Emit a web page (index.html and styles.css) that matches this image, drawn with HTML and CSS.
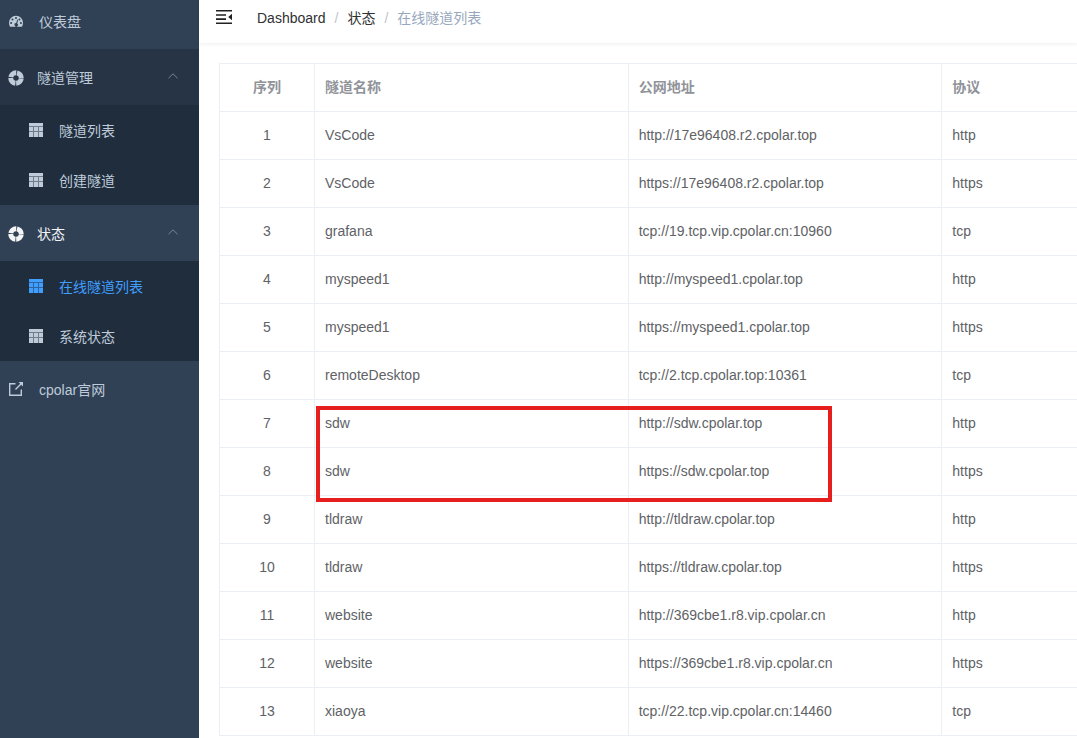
FILE: index.html
```html
<!DOCTYPE html>
<html lang="zh-CN">
<head>
<meta charset="utf-8">
<title>在线隧道列表</title>
<link rel="stylesheet" href="styles.css">
</head>
<body>
<svg class="defs" aria-hidden="true">
  <symbol id="i-grid" viewBox="0 0 14 14">
    <path d="M0 0h14v3H0zM0 4h4v4H0zM5 4h4v4H5zM10 4h4v4h-4zM0 9h4v5H0zM5 9h4v5H5zM10 9h4v5h-4z"/>
    <path opacity=".5" d="M0 3h14v1H0zM4 4h1v10H4zM9 4h1v10H9zM0 8h14v1H0z"/>
  </symbol>
  <symbol id="i-ring" viewBox="0 0 16 16">
    <circle cx="8" cy="8" r="5.3" fill="none" stroke="currentColor" stroke-width="4.900" stroke-dasharray="7.53 .8" stroke-dashoffset="-.4"/>
  </symbol>
  <symbol id="i-arrow" viewBox="0 0 10 6">
    <path d="M.5 5.2 5 .8l4.500 4.400" fill="none" stroke="currentColor"/>
  </symbol>
</svg>
<div class="app">
  <nav class="sidebar">
    <a class="item item-first" href="#">
      <svg class="icon" viewBox="0 0 14 14"><path fill-rule="evenodd" d="M7 .8a7 7 0 0 0-7 7c0 1.600.4 2.900 1 3.900h12c.6-1 1-2.300 1-3.900a7 7 0 0 0-7-7zM7 2a1 1 0 1 1 0 2 1 1 0 0 1 0-2zM3.500 3.500a1 1 0 1 1 0 2 1 1 0 0 1 0-2zM2.100 7.100a1 1 0 1 1 0 2 1 1 0 0 1 0-2zM11.900 7.100a1 1 0 1 1 0 2 1 1 0 0 1 0-2zM10.500 3.500a1 1 0 1 1 0 2 1 1 0 0 1 0-2zM8.300 4.500l.9.300-1 3.600a1.700 1.700 0 1 1-1-.3z"/></svg>
      <span>仪表盘</span>
    </a>
    <button class="item group hovered" type="button" aria-expanded="true">
      <svg class="icon-ring"><use href="#i-ring"/></svg><span>隧道管理</span><svg class="arrow"><use href="#i-arrow"/></svg>
    </button>
    <div class="submenu">
      <a class="sub" href="#"><svg class="icon"><use href="#i-grid"/></svg><span>隧道列表</span></a>
      <a class="sub" href="#"><svg class="icon"><use href="#i-grid"/></svg><span>创建隧道</span></a>
    </div>
    <button class="item group current" type="button" aria-expanded="true">
      <svg class="icon-ring"><use href="#i-ring"/></svg><span>状态</span><svg class="arrow"><use href="#i-arrow"/></svg>
    </button>
    <div class="submenu">
      <a class="sub active" href="#"><svg class="icon"><use href="#i-grid"/></svg><span>在线隧道列表</span></a>
      <a class="sub" href="#"><svg class="icon"><use href="#i-grid"/></svg><span>系统状态</span></a>
    </div>
    <a class="item" href="#">
      <svg class="icon" viewBox="0 0 14 14"><path fill="none" stroke="currentColor" stroke-width="1.400" d="M6.500 1.700H.7v11.600h11.600V7.500M6.500 7.500l5.900-5.900"/><path d="M9.500 0H14v4.500z"/></svg>
      <span>cpolar官网</span>
    </a>
  </nav>
  <main class="main">
    <header class="navbar">
      <button class="toggle" type="button" aria-label="收起菜单">
        <svg viewBox="0 0 16 14"><path d="M0 0h16v1.600H0zM0 4.200h10v1.600H0zM0 8.300h10v1.600H0zM0 12.400h16V14H0zM16 3.800v6.400L12.200 7z"/></svg>
      </button>
      <div class="breadcrumb">
        <a href="#">Dashboard</a><span class="sep">/</span><a href="#">状态</a><span class="sep">/</span><span class="here">在线隧道列表</span>
      </div>
    </header>
    <section class="content">
      <table class="table">
        <colgroup><col class="c-index"><col class="c-wide"><col class="c-wide"><col></colgroup>
        <thead><tr><th>序列</th><th>隧道名称</th><th>公网地址</th><th>协议</th></tr></thead>
        <tbody>
          <tr><td>1</td><td>VsCode</td><td>http://17e96408.r2.cpolar.top</td><td>http</td></tr>
          <tr><td>2</td><td>VsCode</td><td>https://17e96408.r2.cpolar.top</td><td>https</td></tr>
          <tr><td>3</td><td>grafana</td><td>tcp://19.tcp.vip.cpolar.cn:10960</td><td>tcp</td></tr>
          <tr><td>4</td><td>myspeed1</td><td>http://myspeed1.cpolar.top</td><td>http</td></tr>
          <tr><td>5</td><td>myspeed1</td><td>https://myspeed1.cpolar.top</td><td>https</td></tr>
          <tr><td>6</td><td>remoteDesktop</td><td>tcp://2.tcp.cpolar.top:10361</td><td>tcp</td></tr>
          <tr><td>7</td><td>sdw</td><td>http://sdw.cpolar.top</td><td>http</td></tr>
          <tr><td>8</td><td>sdw</td><td>https://sdw.cpolar.top</td><td>https</td></tr>
          <tr><td>9</td><td>tldraw</td><td>http://tldraw.cpolar.top</td><td>http</td></tr>
          <tr><td>10</td><td>tldraw</td><td>https://tldraw.cpolar.top</td><td>https</td></tr>
          <tr><td>11</td><td>website</td><td>http://369cbe1.r8.vip.cpolar.cn</td><td>http</td></tr>
          <tr><td>12</td><td>website</td><td>https://369cbe1.r8.vip.cpolar.cn</td><td>https</td></tr>
          <tr><td>13</td><td>xiaoya</td><td>tcp://22.tcp.vip.cpolar.cn:14460</td><td>tcp</td></tr>
        </tbody>
      </table>
      <div class="highlight"></div>
    </section>
  </main>
</div>
</body>
</html>
```
FILE: styles.css
```css
* { box-sizing: border-box; }

body {
  margin: 0;
  font: 14px/23px "Liberation Sans", "Noto Sans CJK SC", sans-serif;
  color: #606266;
  background: #fff;
}

a { color: inherit; text-decoration: none; }
button { border: 0; background: none; font: inherit; color: inherit; text-align: left; cursor: pointer; }
svg { display: block; flex: none; fill: currentColor; }
.defs { position: absolute; width: 0; height: 0; }

.app { display: flex; min-height: 100vh; }

.sidebar {
  display: flex;
  flex-direction: column;
  flex: none;
  width: 199px;
  background: #304156;
  color: #bfcbd9;
}
.sidebar span { padding-top: 2px; }

.item {
  display: flex;
  align-items: center;
  gap: 16px;
  width: 100%;
  height: 56px;
  padding: 0 20px 0 9px;
}
.item-first { height: 49px; padding-bottom: 6px; }
.group { gap: 13px; padding-left: 8px; }
.hovered { background: #263445; }
.current { color: #f4f4f5; }

.icon { width: 14px; height: 14px; }
.icon-ring { width: 16px; height: 16px; margin-top: 2px; }
.arrow { width: 10px; height: 6px; margin: 0 1px 2px auto; color: #7b8490; }

.submenu { background: #1f2d3d; }
.sub {
  display: flex;
  align-items: center;
  gap: 16px;
  height: 50px;
  padding-left: 29px;
}
.active { color: #409eff; }

.main { flex: 1; min-width: 0; }

.navbar {
  display: flex;
  align-items: center;
  gap: 25px;
  height: 43px;
  padding: 0 17px 9px;
  box-shadow: 0 1px 4px rgba(0, 21, 41, 0.08);
}
.toggle { padding: 0; color: #222; }
.toggle svg { width: 16px; height: 14px; }

.breadcrumb { display: flex; padding-top: 3px; color: #303133; }
.sep { margin: 0 9px; color: #c0c4cc; }
.here { color: #97a8be; }

.content { position: relative; padding: 20px 0 0 20px; }

.table {
  width: 100%;
  table-layout: fixed;
  border-collapse: separate;
  border-spacing: 0;
  border-top: 1px solid #ebeef5;
  border-left: 1px solid #ebeef5;
}
.c-index { width: 95px; }
.c-wide { width: 36.6%; }

th, td {
  height: 48px;
  padding: 0 10px;
  border-bottom: 1px solid #ebeef5;
  border-right: 1px solid #ebeef5;
  text-align: left;
}
th { color: #909399; }
th:first-child, td:first-child { text-align: center; }
th:last-child, td:last-child { border-right: 0; }

.highlight {
  position: absolute;
  top: 363px;
  left: 117px;
  width: 516px;
  height: 96px;
  border: 4px solid #e61e1e;
  pointer-events: none;
}
```
